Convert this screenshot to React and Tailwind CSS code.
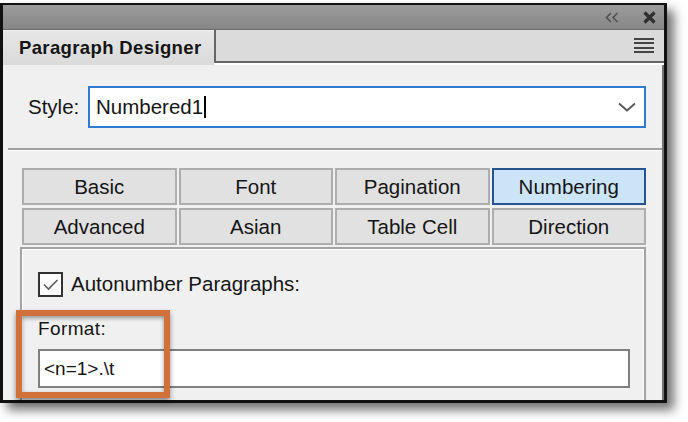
import React from "react";

// Paragraph Designer panel (FrameMaker style)
const tabs = [
  "Basic",
  "Font",
  "Pagination",
  "Numbering",
  "Advanced",
  "Asian",
  "Table Cell",
  "Direction",
];

function CollapseIcon() {
  return (
    <svg width="14" height="11" viewBox="0 0 14 11">
      <path d="M6 1 L1.5 5.5 L6 10" fill="none" stroke="#505050" strokeWidth="1.6" />
      <path d="M12.5 1 L8 5.5 L12.5 10" fill="none" stroke="#505050" strokeWidth="1.6" />
    </svg>
  );
}

function CloseIcon() {
  return (
    <svg width="13" height="13" viewBox="0 0 13 13">
      <path d="M1.5 1.5 L11.5 11.5 M11.5 1.5 L1.5 11.5" stroke="#2e2e2e" strokeWidth="3.2" />
    </svg>
  );
}

function Chevron() {
  return (
    <svg width="18" height="10" viewBox="0 0 18 10">
      <path d="M1 1.5 L9 8.5 L17 1.5" fill="none" stroke="#555" strokeWidth="1.8" />
    </svg>
  );
}

export default function App() {
  return (
    <div
      className="relative w-[688px] h-[422px] bg-white overflow-hidden text-[#151515]"
      style={{ fontFamily: '"Liberation Sans", Arial, sans-serif' }}
    >
      {/* Window */}
      <div className="mt-[3px] w-[667px] h-[400px] flex flex-col border-t-2 border-l-[3px] border-r-[3px] border-b-[3px] border-[#111] shadow-[7px_7px_10px_rgba(0,0,0,0.55)]">
        {/* Title bar */}
        <div className="h-[25px] flex items-center justify-end gap-[24px] pr-[8px] bg-gradient-to-b from-[#9c9c9c] to-[#868686] border-b border-[#6a6a6a]">
          <CollapseIcon />
          <CloseIcon />
        </div>

        {/* Panel tab row */}
        <div className="h-[35px] flex">
          <div className="w-[211px] flex items-center pl-[16px] bg-gradient-to-b from-[#e6e6e6] to-[#dadada] border-t border-[#f2f2f2] font-bold text-[18.5px] tracking-[0.02em]">
            Paragraph Designer
          </div>
          <div className="flex-1 flex items-center justify-end pr-[10px] bg-[#dbdbdb] border-l-2 border-b-2 border-[#666] mb-[2px]">
            <div className="flex flex-col gap-[2.5px]">
              <div className="w-[20px] h-[2px] bg-[#444]" />
              <div className="w-[20px] h-[2px] bg-[#444]" />
              <div className="w-[20px] h-[2px] bg-[#444]" />
              <div className="w-[20px] h-[2px] bg-[#444]" />
            </div>
          </div>
        </div>

        {/* Content */}
        <div className="flex-1 flex flex-col bg-[#f0f0f0] border-r-2 border-[#727272] text-[20.5px]">
          {/* Style row */}
          <div className="flex items-center mt-[21px] pl-[25px]">
            <span className="w-[60px]">Style:</span>
            <div className="w-[558px] h-[42px] flex items-center justify-between bg-white border-2 border-[#2f7bd1] pl-[6px] pr-[8px]">
              <div className="flex items-center">
                <span>Numbered1</span>
                <span className="ml-[1px] w-[2px] h-[22px] bg-black" />
              </div>
              <Chevron />
            </div>
          </div>

          {/* Separator */}
          <div className="mt-[20px] ml-[5px] h-[2px] bg-[#a0a0a0]" />
          <div className="ml-[5px] h-px bg-white" />

          {/* Tabs */}
          <div className="mt-[17px] ml-[19px] w-[624px] grid grid-cols-4 gap-x-[2px] gap-y-[3px]">
            {tabs.map((t) => (
              <div
                key={t}
                className={`h-[37px] flex items-center justify-center pt-[2px] border-2 ${
                  t === "Numbering"
                    ? "bg-[#cce4f7] border-[#24558f]"
                    : "bg-[#e1e1e1] border-[#adadad]"
                }`}
              >
                {t}
              </div>
            ))}
          </div>

          {/* Numbering panel */}
          <div className="flex-1 mt-[2px] ml-[17px] w-[626px] border-t-2 border-l-2 border-r-2 border-[#a3a3a3]">
            <div className="h-full border-t border-l border-r border-white pl-[15px]">
              <div className="flex items-center mt-[19px] gap-[8px]">
                <div className="w-[25px] h-[25px] flex items-center justify-center bg-white border-2 border-[#333]">
                  <svg width="17" height="13" viewBox="0 0 17 13">
                    <path d="M2 6.5 L6.5 11 L15.5 2" fill="none" stroke="#5c5c5c" strokeWidth="1.6" />
                  </svg>
                </div>
                <span>Autonumber Paragraphs:</span>
              </div>
              <div className="mt-[15px] text-[19px] tracking-[0.02em]">Format:</div>
              <div className="mt-[6px] w-[592px] h-[39px] flex items-center pl-[4px] bg-white border-2 border-[#7f7f7f] text-[19px]">
                {"<n=1>.\\t"}
              </div>
            </div>
          </div>
        </div>
      </div>

      {/* Orange annotation */}
      <div className="absolute left-[16px] top-[310px] w-[154px] h-[88px] border-[6px] border-[#d2703c] shadow-[0_3px_5px_rgba(0,0,0,0.45),inset_0_2px_4px_rgba(0,0,0,0.4)]" />
    </div>
  );
}
